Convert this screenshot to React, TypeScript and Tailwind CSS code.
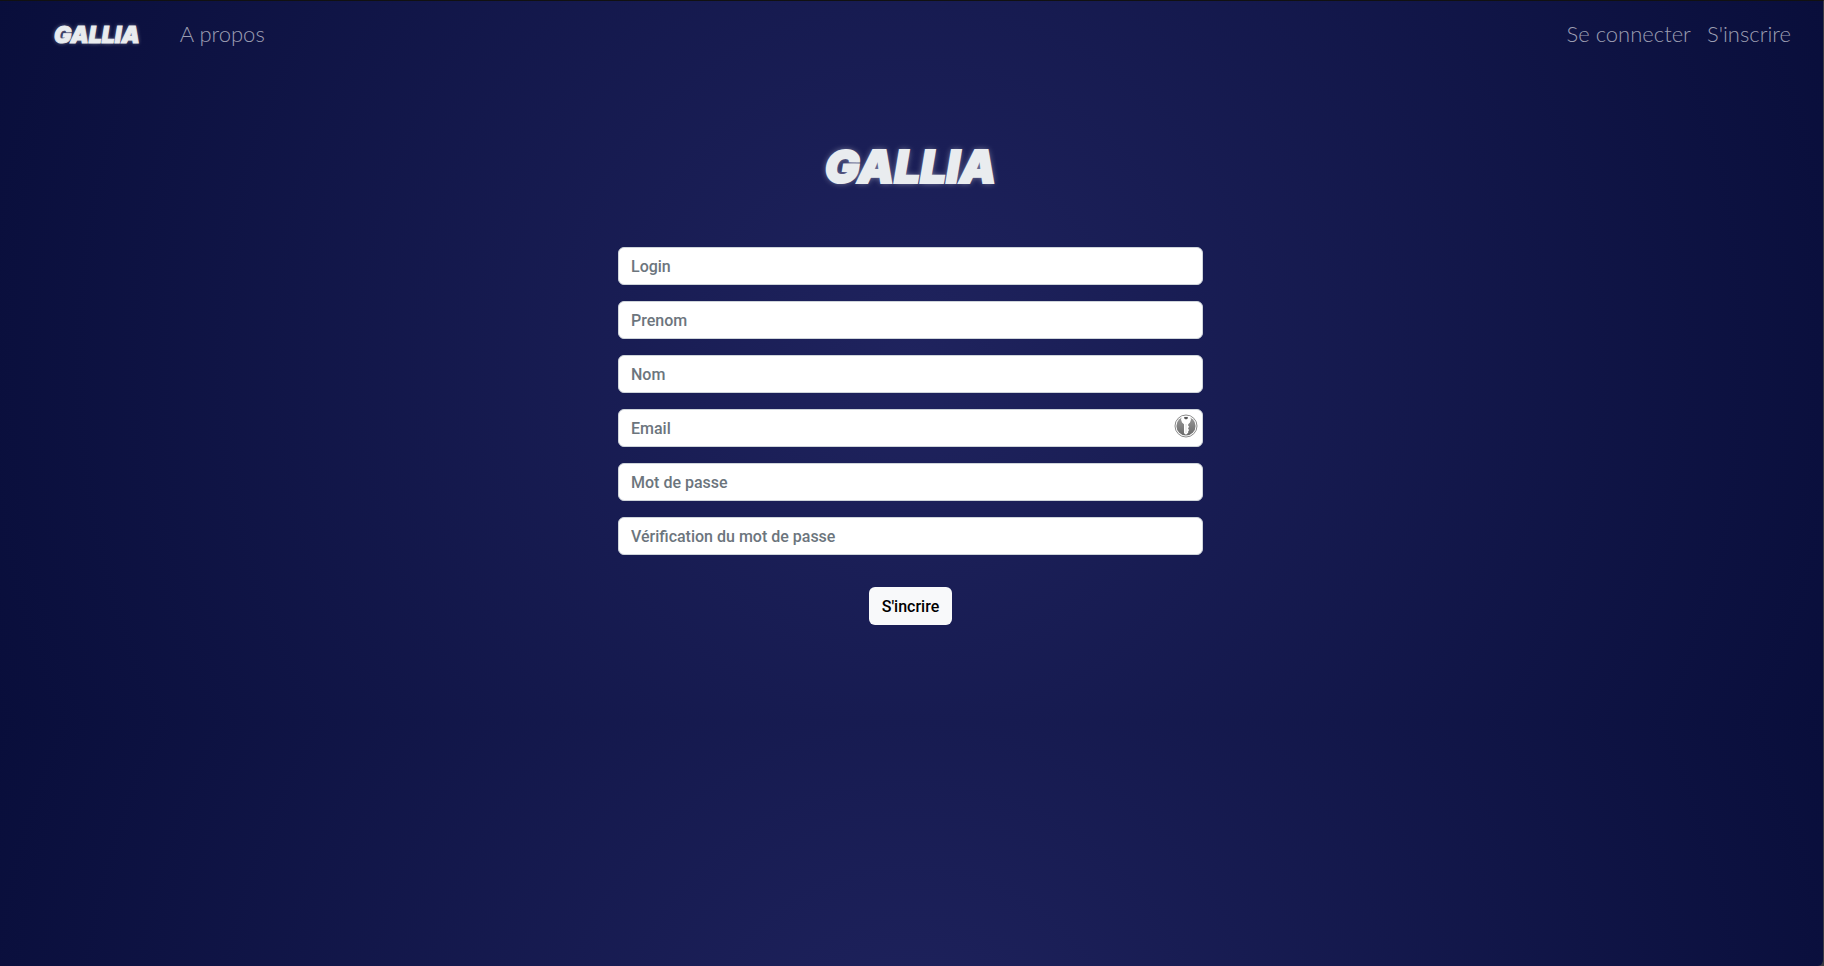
const fields = [
  { id: "login", label: "Login", type: "text" },
  { id: "prenom", label: "Prenom", type: "text" },
  { id: "nom", label: "Nom", type: "text" },
  { id: "email", label: "Email", type: "email" },
  { id: "password", label: "Mot de passe", type: "password" },
  { id: "password-check", label: "Vérification du mot de passe", type: "password" },
];

function KeyIcon() {
  return (
    <svg viewBox="0 0 24 24" className="size-6" aria-hidden="true">
      <defs>
        <linearGradient id="disc" x1="0" y1="0" x2="0" y2="1">
          <stop offset="0" stopColor="#999" />
          <stop offset="1" stopColor="#6a6a6a" />
        </linearGradient>
      </defs>
      <circle cx="12" cy="12" r="11" fill="#fff" stroke="#8a8a8a" strokeWidth="1" />
      <circle cx="12" cy="12" r="9.6" fill="url(#disc)" />
      <path
        d="M8 2.200h8l1 3.200-1 3.200-1.800 1.600v1.600l1 1-1 1.200v1l1 1-1 1.200v1.600L12 20.800l-2-1.600v-9L8 8.600 7 5.400z"
        fill="#fff"
      />
      <path d="M10.200 3h3.600v1.400L12 5.600l-1.800-1.200z" fill="#555" />
      <path d="M12 10v9" stroke="#ccc" strokeWidth="0.600" />
    </svg>
  );
}

export default function App() {
  return (
    <div className="min-h-screen bg-[#3a3b42]">
      <div className="flex min-h-screen flex-col rounded-br-md border-t border-r border-t-[#111] border-r-[#3a3b42] bg-[radial-gradient(circle,#1f235e,#090e3b)] bg-[length:100%_722px] pr-0.5 font-[Roboto,sans-serif]">
        <header className="flex items-center justify-between pt-3 pr-[30px] pl-[54px] font-[Lato,sans-serif] text-[22px] leading-10 font-light text-[#9c9eb2]">
          <nav className="flex items-center gap-10">
            <a
              href="#"
              className="pt-0.5 font-[Inter,sans-serif] text-[23px] leading-10 font-black text-[#e9ecef] italic [text-shadow:0_0_4px_#ffffff80] [-webkit-text-stroke:1px_#e9ecef]"
            >
              GALLIA
            </a>
            <a href="#">A propos</a>
          </nav>
          <nav className="flex items-center gap-4">
            <a href="#">Se connecter</a>
            <a href="#">S'inscrire</a>
          </nav>
        </header>

        <main className="mx-auto w-full max-w-[585px]">
          <h1 className="mt-[78px] text-center font-[Inter,sans-serif] text-[46px] leading-[66px] font-black text-[#e9ecef] italic [text-shadow:0_0_6px_#ffffff80] [-webkit-text-stroke:2px_#e9ecef]">
            GALLIA
          </h1>
          <form className="mt-12 flex flex-col gap-4">
            {fields.map((field) => (
              <div key={field.id} className="relative">
                <input
                  id={field.id}
                  type={field.type}
                  aria-label={field.label}
                  placeholder={field.label}
                  className="block h-[38px] w-full rounded-md border border-[#ced4da] bg-white px-3 text-base font-medium text-[#212529] placeholder:text-[#6c757d]"
                />
                {field.id === "email" && (
                  <span className="absolute top-[5px] right-[5px]">
                    <KeyIcon />
                  </span>
                )}
              </div>
            ))}
            <button
              type="submit"
              className="mt-4 h-[38px] self-center rounded-md bg-[#f8f9fa] px-[13px] pt-px text-base font-medium text-black"
            >
              S'incrire
            </button>
          </form>
        </main>
      </div>
    </div>
  );
}
